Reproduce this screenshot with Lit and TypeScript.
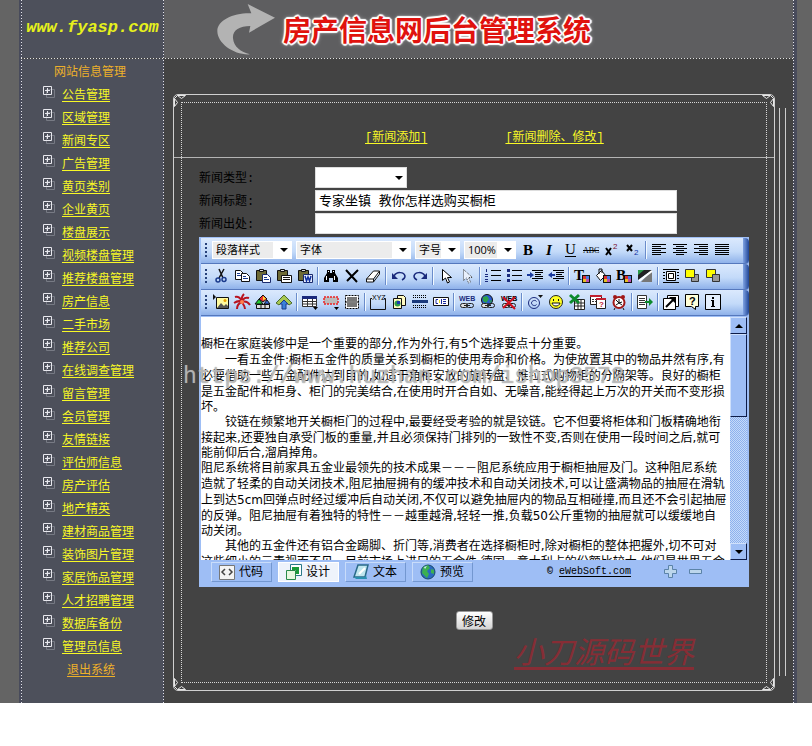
import { LitElement, html, css, svg } from "lit";
import { customElement, property } from "lit/decorators.js";

const swatches = (x: number, y: number) => svg`
  <path fill="#111" d="M${x} ${y}h8v8h-8z"/>
  <path fill="#d33" d="M${x + 1} ${y + 1}h3v3h-3z"/>
  <path fill="#4a7be0" d="M${x + 4} ${y + 1}h3v3h-3z"/>
  <path fill="#e8c020" d="M${x + 1} ${y + 4}h3v3h-3z"/>
  <path fill="#c04fb0" d="M${x + 4} ${y + 4}h3v3h-3z"/>`;

const board = svg`
  <path fill="#6d6a35" stroke="#111" d="M1.5 2.5h10v10h-10z"/>
  <path fill="#ddd" stroke="#111" d="M4.500 1.500h4v2h-4z"/>`;

const chain = svg`
  <rect x="1.500" y="9.500" width="7" height="4" rx="2" fill="#ddd" stroke="#222"/>
  <rect x="7.500" y="9.500" width="7" height="4" rx="2" fill="none" stroke="#222"/>
  <path stroke="#222" d="M5 11.500h6"/>`;

const icons: Record<string, unknown> = {
  bold: svg`<text x="3" y="13" class="serif b">B</text>`,
  italic: svg`<text x="5" y="13" class="serif b i">I</text>`,
  underline: svg`<text x="3" y="12" class="serif">U</text><path stroke="#000" d="M3 14.500h11"/>`,
  strike: svg`<text x="0" y="11" class="serif small">ABC</text><path stroke="#000" d="M0 8.500h16"/>`,
  sup: svg`<path stroke="#000" stroke-width="2" d="M2 6l5 7M7 6l-5 7"/><text x="9" y="7" class="sans tiny" fill="#7a1030">2</text>`,
  sub: svg`<path stroke="#000" stroke-width="2" d="M2 3l5 6M7 3l-5 6"/><text x="9" y="13" class="sans tiny" fill="#1030a0">2</text>`,
  alignLeft: svg`<path stroke="#000" d="M1 2.500h14M1 4.500h9M1 6.500h14M1 8.500h9M1 10.500h14M1 12.500h9"/>`,
  alignCenter: svg`<path stroke="#000" d="M1 2.500h14M4 4.500h8M1 6.500h14M4 8.500h8M1 10.500h14M4 12.500h8"/>`,
  alignRight: svg`<path stroke="#000" d="M1 2.500h14M6 4.500h9M1 6.500h14M6 8.500h9M1 10.500h14M6 12.500h9"/>`,
  justify: svg`<path stroke="#000" d="M1 2.500h14M1 4.500h14M1 6.500h14M1 8.500h14M1 10.500h14M1 12.500h14"/>`,
  cut: svg`<path stroke="#111" stroke-width="1.500" fill="none" d="M6 1l4 9M11 1L6 10"/><circle cx="5" cy="12" r="2" fill="none" stroke="#1a3a8c" stroke-width="1.500"/><circle cx="11" cy="11.500" r="2" fill="none" stroke="#1a3a8c" stroke-width="1.500"/>`,
  copy: svg`<path fill="#fff" stroke="#111" d="M1.500 2.500h5l3 3v6h-8z"/><path fill="#fff" stroke="#111" d="M7.500 5.500h5l3 3v5h-8z"/><path stroke="#1a3a8c" d="M3 5.500h3M3 7.500h4M9 8.500h3M9 10.500h5"/>`,
  paste: svg`${board}<path fill="#fff" stroke="#1a2a6c" d="M7.500 6.500h5l3 3v5h-8z"/><path stroke="#1a3a8c" d="M9 9.500h3M9 11.500h5"/>`,
  pasteText: svg`${board}<path fill="#fff" stroke="#111" d="M5.500 7.500h10v7h-10z"/><path stroke="#111" d="M7 9.500h7M7 11.500h7"/>`,
  pasteWord: svg`${board}<path fill="#e8eefc" stroke="#1a2a6c" d="M6.500 6.500h9v8h-9z"/><path stroke="#1030a0" stroke-width="1.500" fill="none" d="M8 8l1.500 5L11 9l1.500 4L14 8"/>`,
  find: svg`<path d="M4 2h3v3h2V2h3v3l3 5v4h-5v-4H6v4H1v-4l3-5z"/><path fill="#fff" d="M3 8h1v4H3zM11 8h1v4h-1zM5 3h1v1H5zM10 3h1v1h-1z"/>`,
  remove: svg`<path stroke="#000" stroke-width="2" d="M2 2l11 12M14 2L3 13"/>`,
  eraser: svg`<path fill="#fff" stroke="#111" d="M1.500 11l7-8h6l-6 8zM1.500 11v3h7v-3M8.500 14l6-8V3"/>`,
  undo: svg`<path fill="none" stroke="#1a2a7c" stroke-width="1.500" d="M3 8c3-5 10-4 11 0 0 2-1 3-3 4"/><path fill="#1a2a7c" d="M1 5v6h6z"/>`,
  redo: svg`<path fill="none" stroke="#1a2a7c" stroke-width="1.500" d="M13 8C10 3 3 4 2 8c0 2 1 3 3 4"/><path fill="#1a2a7c" d="M15 5v6H9z"/>`,
  pointer: svg`<path fill="#fff" stroke="#000" d="M4.500 1.500v11l3-2.500 2 5 2-1-2-4.500h4z"/>`,
  pointerOff: svg`<path fill="#e8f0fc" stroke="#444" stroke-dasharray="1 1" d="M4.500 1.500v11l3-2.500 2 5 2-1-2-4.500h4z"/>`,
  ol: svg`<path stroke="#1a2a7c" d="M1.500 1v3M0 6.500h3M0 8.500h3M0 11.500h3M0 13.500h3"/><path stroke="#000" d="M6 2.500h10M6 7.500h10M6 12.500h10"/>`,
  ul: svg`<path fill="#1a2a7c" d="M1 1h3v3H1zM1 6h3v3H1zM1 11h3v3H1z"/><path stroke="#000" d="M6 2.500h10M6 7.500h10M6 12.500h10"/>`,
  indent: svg`<path stroke="#000" d="M5 2.500h11M8 4.500h8M8 6.500h6M8 8.500h8M5 10.500h11M8 12.500h3"/><path fill="#1a3a9c" d="M3 4l4 3-4 3zM0 6h3v2H0z"/>`,
  outdent: svg`<path stroke="#000" d="M5 2.500h11M8 4.500h8M8 6.500h6M8 8.500h8M5 10.500h11M8 12.500h3"/><path fill="#1a3a9c" d="M4 4L0 7l4 3zM4 6h3v2H4z"/>`,
  textColor: svg`<text x="0" y="12" class="serif b">T</text>${swatches(8, 7)}`,
  fillColor: svg`<path fill="#fff" stroke="#111" d="M1.500 7.500l5-5 4 5-5 5z"/><path stroke="#111" fill="none" d="M4 6V1h3v4"/>${swatches(8, 7)}`,
  backColor: svg`<text x="0" y="12" class="serif b">B</text>${swatches(8, 7)}`,
  gradient: svg`<path fill="#222" d="M1 2h14L1 12z"/><path fill="#2a9a4a" d="M1 2h6L1 7z"/><path fill="#777" d="M15 2v12H4z"/><path stroke="#fff" stroke-width="2" d="M2 13L15 3"/>`,
  frame: svg`<path stroke="#000" d="M0 1.500h16M0 14.500h16M0 4.500h2M0 7.500h2M0 10.500h2M14 4.500h2M14 7.500h2M14 10.500h2"/><path fill="#fff" stroke="#000" d="M3.500 3.500h9v9h-9zM5.500 5.500h5v5h-5z"/>`,
  front: svg`<path fill="#999" stroke="#333" d="M7.500 6.500h7v7h-7z"/><path fill="#ff0" stroke="#333" d="M1.500 1.500h9v8h-9z"/>`,
  back: svg`<path fill="#ff0" stroke="#333" d="M1.500 1.500h9v8h-9z"/><path fill="#999" stroke="#333" d="M7.500 6.500h7v7h-7z"/>`,
  image: svg`<path fill="#111" d="M0 0l3 3-3 3z"/><path fill="#fffba0" stroke="#111" d="M3.500 3.500h12v11h-12z"/><path fill="#555" d="M4 14l4-5 3 3 2-2 2 2v2z"/><circle cx="12" cy="6.500" r="1.500" fill="#e8a000"/>`,
  flash: svg`<path stroke="#b81420" stroke-width="2" fill="none" d="M8 8C7 4 4 2 1 3M8 8C7 4 8 2 10 0M8 8c1-4 4-5 7-4M8 8C5 6 3 7 0 9M8 8c3-1 6 0 8 3M8 8c-3 1-5 3-5 7M8 8c1 2 3 4 3 7"/><circle cx="8" cy="8" r="2" fill="#ff8050"/>`,
  media: svg`<path fill="#e33" stroke="#111" d="M8 1l4 4-4 3-4-3z"/><path fill="#fd3" d="M8 2l3 3-3 1z"/><path fill="#2c3" stroke="#111" d="M4 5l4 5H0z"/><path fill="#36d" stroke="#111" d="M12 6l3 4H9z"/><path fill="#ddd" stroke="#111" d="M1.500 10.500h13v4h-13zM6 10.500v4M10 10.500v4"/>`,
  file: svg`<path fill="#a8c850" stroke="#4a6a30" d="M8 1l8 8-3 2-5-5-5 5-3-2z"/><path fill="#3a80d8" stroke="#1a3a8c" d="M8 6l4 4h-2v5H6v-5H4z"/>`,
  table: svg`<path fill="#fff" stroke="#333" d="M.5 2.500h14v10H.5zM.5 7.500h14M.5 10h14M5.500 4v8M10.500 4v8"/><path fill="#1a2a7c" d="M0 2h15v3H0z"/><path fill="#000" d="M11 13h5l-2.500 3z"/>`,
  row: svg`<path fill="#bbb" stroke="#e22" stroke-dasharray="2 1" stroke-width="1.500" d="M1 3h14v7H1z"/><path fill="#000" d="M11 13h5l-2.500 3z"/>`,
  cell: svg`<path fill="#fff" stroke="#000" stroke-dasharray="2 1" d="M1.500 1.500h13v13h-13z"/><path fill="#777" d="M3 3h10v4H3zM3 9h10v4H3z"/><path stroke="#000" d="M1 8h14"/>`,
  xyz: svg`<path fill="none" stroke="#111" d="M2 4.500H.5v11h15v-11H14"/><text x="2" y="6" class="sans micro thin">XYZ</text>`,
  pages: svg`<path fill="#fffbc0" stroke="#111" d="M6.500 1.500h6l2 2v8h-8z"/><path fill="#fffbc0" stroke="#111" d="M2.500 4.500h8v10h-8z"/><circle cx="6.500" cy="9.500" r="3" fill="#2a9a4a"/><path fill="#1a3aac" d="M6 7h3v3H6z"/>`,
  rule: svg`<path stroke="#000" stroke-dasharray="1 1" d="M1 1.500h14M1 3.500h14M1 11.500h14M1 13.500h14"/><path stroke="#1a3a7c" stroke-width="3" d="M0 7.500h16"/>`,
  marquee: svg`<path fill="#fff" stroke="#111" d="M.5 3.500h15v8H.5z"/><path fill="none" stroke="#1a2a9c" d="M5 5.500H3v4h2M8.500 5v5M10 5.500h3M10 7.500h3M10 9.500h3"/><path fill="#e8d820" d="M6 6h1v3H6z"/>`,
  link: svg`<text x="0" y="7" class="sans micro blue">WEB</text>${chain}`,
  globe: svg`<circle cx="7" cy="6" r="5.500" fill="#2a5ad0" stroke="#111"/><path fill="#2ca04a" d="M3 3l4-1 2 3-3 4-3-2zM9 7l3-1-1 3z"/>${chain}`,
  unlink: svg`<text x="0" y="7" class="sans micro">WEB</text>${chain}<path stroke="#d01020" stroke-width="2" d="M2 3l12 12M14 3L2 14"/>`,
  copyright: svg`<circle cx="7" cy="9" r="5.500" fill="none" stroke="#1a2a7c"/><path fill="none" stroke="#1a2a7c" d="M9.500 7.500c-1-2-5-1-5 1.500s4 3.500 5 1.500"/><path fill="#111" d="M11 1h5l-2.500 3z"/>`,
  smile: svg`<circle cx="8" cy="8" r="6.500" fill="#ff2" stroke="#222"/><path stroke="#111" fill="#fff" d="M4 9c1 4 7 4 8 0zM5.500 5v2M10.500 5v2"/>`,
  excel: svg`<path fill="#fff" stroke="#222" d="M5.500 5.500h10v10h-10zM5.500 9h10M5.500 12h10M9 6v9M12 6v9"/><path stroke="#0c8a2c" stroke-width="3" d="M1 1l9 8M10 1L1 9"/>`,
  calendar: svg`<path fill="#fff" stroke="#222" d="M.5 1.500h11v9H.5z"/><path fill="#c02030" d="M0 1h12v2H0z"/><path stroke="#333" stroke-dasharray="2 1" d="M2 5.500h4M2 7.500h4"/><path fill="#fff" stroke="#222" d="M6.500 4.500h9v10h-9z"/><path fill="#c02030" d="M6 4h10v2H6z"/><text x="9" y="13" class="sans tiny b" fill="#c02030">?</text>`,
  clock: svg`<circle cx="4" cy="3" r="2" fill="#a01818"/><circle cx="12" cy="3" r="2" fill="#a01818"/><circle cx="8" cy="8.500" r="5.500" fill="#fff" stroke="#a01818" stroke-width="2"/><path stroke="#111" fill="none" d="M8 5v4l3-1M4 14l-1 2M12 14l1 2M5 6l3 3M5 11l3-2M8 9l3 2"/>`,
  doc: svg`<path fill="#fff" stroke="#333" d="M.5 1.500h9v13h-9z"/><path stroke="#333" d="M2 4.500h6M2 6.500h6M2 8.500h6M2 10.500h6"/><path fill="#0c8a2c" d="M8 7h4V4l4 4-4 4V9H8z"/>`,
  expand: svg`<path fill="#fff" stroke="#000" d="M4.500 1.500h11v11h-3M4.500 1.500v3M.5 4.500h12v11H.5z"/><path stroke="#000" stroke-width="2" d="M3 13l8-8"/><path d="M6 3h7v7z"/>`,
  help: svg`<path fill="#ffffd8" stroke="#000" d="M1.500.5h13v12h-3v3l-4-3h-6z"/><text x="5" y="11" class="sans mid b">?</text>`,
  info: svg`<path fill="#e4effd" stroke="#000" d="M.5.500h15v15H.5z"/><path fill="#000" d="M7 3h2v2H7zM6 6h3v6h1v1H6v-1h1V7H6z"/>`,
  code: svg`<path fill="#f4f4f4" stroke="#777" d="M.5 1.500h15v14H.5z"/><path fill="none" stroke="#444" stroke-width="1.500" d="M6 5L3 8l3 3M10 5l3 3-3 3"/>`,
  design: svg`<path fill="#fff" stroke="#2a7a8a" d="M4.500.500h11v11h-11z"/><path fill="#e8f8e0" stroke="#2a8a4a" d="M.5 6.500h9v9h-9z"/><path fill="#1a9a3a" d="M6 3h7v7h-3V6H6z"/>`,
  text: svg`<path fill="#bfe6ee" stroke="#2a6a8a" stroke-width="1.500" d="M5 1h10l-3 12H1z"/><path fill="#2a90b0" d="M1 13l11 0 1-2 1 4H3z"/><path stroke="#fff" stroke-width="2" d="M6 10l6-6"/>`,
  preview: svg`<circle cx="8" cy="8" r="7" fill="#2a6ac0" stroke="#1a4a6a"/><path fill="#3cb050" d="M3 3l5-2 2 3-3 3 2 3-2 4-5-5zM11 5l3 1v4l-3-1z"/><path fill="#cfe8f8" d="M4 3l3-1-2 3z"/>`,
};

@customElement("tool-icon")
class ToolIcon extends LitElement {
  @property() name = "";
  static styles = css`
    :host { display: block; width: 16px; height: 16px; }
    svg { display: block; overflow: visible; }
    .serif { font: 15px "Liberation Serif", serif; }
    .sans { font: 12px "Liberation Sans", sans-serif; }
    .b { font-weight: 700; }
    .i { font-style: italic; }
    .small { font-size: 8px; }
    .tiny { font-size: 8px; }
    .mid { font-size: 11px; }
    .micro { font-size: 7px; font-weight: 700; }
    .thin { font-weight: 400; }
    .blue { fill: #1a2a7c; }
  `;
  render() {
    return html`<svg width="16" height="16" viewBox="0 0 16 16" fill="#000" aria-hidden="true">${icons[this.name]}</svg>`;
  }
}

const menu = ["公告管理", "区域管理", "新闻专区", "广告管理", "黄页类别", "企业黄页", "楼盘展示", "视频楼盘管理", "推荐楼盘管理", "房产信息", "二手市场", "推荐公司", "在线调查管理", "留言管理", "会员管理", "友情链接", "评估师信息", "房产评估", "地产精英", "建材商品管理", "装饰图片管理", "家居饰品管理", "人才招聘管理", "数据库备份", "管理员信息"];

const row1 = "bold italic underline strike sup sub | alignLeft alignCenter alignRight justify";
const row2 = "cut copy paste pasteText pasteWord | find remove eraser | undo redo | pointer pointerOff | ol ul indent outdent | textColor fillColor backColor gradient | frame front back";
const row3 = "image flash media file | table row cell | xyz pages rule marquee | link globe unlink | copyright smile excel calendar clock | doc | expand help info";

const article = [
  ["橱柜在家庭装修中是一个重要的部分,作为外行,有5个选择要点十分重要。",
    "　　一看五金件:橱柜五金件的质量关系到橱柜的使用寿命和价格。为使放置其中的物品井然有序,有",
    "必要借助一些五金配件达到目的,如适于角柜安放的旋转盘、推拉式购物柜的分隔架等。良好的橱柜",
    "是五金配件和柜身、柜门的完美结合,在使用时开合自如、无噪音,能经得起上万次的开关而不变形损",
    "坏。"],
  ["　　铰链在频繁地开关橱柜门的过程中,最要经受考验的就是铰链。它不但要将柜体和门板精确地衔",
    "接起来,还要独自承受门板的重量,并且必须保持门排列的一致性不变,否则在使用一段时间之后,就可",
    "能前仰后合,溜肩掉角。"],
  ["阻尼系统将目前家具五金业最领先的技术成果－－－阻尼系统应用于橱柜抽屉及门。这种阻尼系统",
    "造就了轻柔的自动关闭技术,阻尼抽屉拥有的缓冲技术和自动关闭技术,可以让盛满物品的抽屉在滑轨",
    "上到达5cm回弹点时经过缓冲后自动关闭,不仅可以避免抽屉内的物品互相碰撞,而且还不会引起抽屉",
    "的反弹。阻尼抽屉有着独特的特性－－越重越滑,轻轻一推,负载50公斤重物的抽屉就可以缓缓地自",
    "动关闭。"],
  ["　　其他的五金件还有铝合金踢脚、折门等,消费者在选择橱柜时,除对橱柜的整体把握外,切不可对",
    "这些细小的元素视而不见。目前市场上进口的五金件,德国、意大利占的份额比较大,他们是世界五金"],
];

@customElement("news-editor")
class NewsEditor extends LitElement {
  static styles = css`
    :host { display: block; background: #9ebef5; padding: 1px 0 0 2px; font: 12px "DejaVu Sans", "Noto Sans CJK SC", sans-serif; color: #000; }
    button { font: inherit; color: inherit; border: 0; padding: 0; background: none; }
    .bar { display: flex; align-items: center; height: 26px; box-sizing: border-box; padding: 0 0 1px 4px; border-bottom: 1px solid #5578bd; border-radius: 0 4px 4px 0;
      background: linear-gradient(to right, #7fa3e4, #1f4595) right / 6px 100% no-repeat, linear-gradient(#dbe9fd, #c3daf9 55%, #8fb2ea); overflow: hidden; }
    .grip { flex: none; width: 2px; height: 14px; margin-right: 3px; background: repeating-linear-gradient(#27417a 0 2px, transparent 2px 4px); }
    .tool { flex: none; width: 21px; height: 22px; display: grid; place-items: center; }
    .sep { flex: none; width: 1px; height: 18px; margin: 0 2px; background: #6a8ccb; box-shadow: 1px 0 #f1f9ff; }
    .picks { display: flex; gap: 4px; margin: 0 1px 0 2px; }
    .pick { position: relative; display: block; height: 18px; background: #fff; padding: 1px; box-sizing: border-box; }
    .pick::after { content: ""; position: absolute; right: 4px; top: 7px; border: 4px solid transparent; border-top-color: #000; border-bottom: 0; }
    .pick select { display: block; appearance: none; border: 0; border-radius: 0; width: 100%; height: 16px; padding: 0 0 0 3px; font: 11px/16px "Open Sans", "Noto Sans CJK SC", sans-serif; color: #000;
      background: linear-gradient(to left, #fff 18px, #ececec 18px); }
    .w-style { width: 80px; } .w-font { width: 115px; } .w-size { width: 45px; } .w-zoom { width: 52px; }
    .edit { display: flex; height: 243px; margin: 1px 2px 0 0; background: #fff; }
    .page { flex: 1; min-width: 0; overflow: hidden; padding-top: 19px; white-space: nowrap; }
    p { margin: 0; }
    .line { display: block; height: 16px; line-height: 16px; }
    .line:last-child { height: 14px; line-height: 14px; }
    p:last-child .line { height: 16px; line-height: 16px; }
    .scroll { width: 17px; display: flex; flex-direction: column; background: repeating-conic-gradient(#8db1ee 0 25%, #c6daf8 0 50%) 0 0 / 2px 2px; }
    .scroll button { height: 17px; display: grid; place-items: center; }
    .scroll button, .thumb { background: #9ebef5; box-sizing: border-box; border: 1px solid #cfe0fb; border-right-color: #0d1c48; border-bottom-color: #0d1c48; }
    .thumb { height: 83px; }
    .rest { flex: 1; }
    .foot { display: flex; align-items: flex-start; height: 27px; box-sizing: border-box; padding: 2px 46px 0 10px; }
    .tabs { display: flex; gap: 6px; flex: 1; }
    .tab { display: flex; align-items: center; gap: 4px; width: 61px; height: 20px; padding-left: 7px; box-sizing: border-box; border: 1px solid; border-color: #c9dcfa #7397d0 #7397d0 #c9dcfa; white-space: nowrap; line-height: 16px; }
    .tab.on { background: #eef3fb; border-color: #fff; }
    .brand { font: 10px/20px "Liberation Mono", monospace; display: flex; gap: 6px; margin-right: 33px; }
    .brand a { color: #000; text-underline-offset: 2px; }
    .grow { display: flex; gap: 11px; padding-top: 3px; }
  `;

  tools(list: string) {
    return list.split(" ").map((n) => n === "|"
      ? html`<span class="sep"></span>`
      : html`<button class="tool" type="button" aria-label=${n}><tool-icon name=${n}></tool-icon></button>`);
  }

  pick(cls: string, label: string) {
    return html`<label class="pick ${cls}"><select aria-label=${label}><option>${label}</option></select></label>`;
  }

  render() {
    return html`
      <div class="bar"><span class="grip"></span>
        <div class="picks">
          ${this.pick("w-style", "段落样式")}${this.pick("w-font", "字体")}${this.pick("w-size", "字号")}${this.pick("w-zoom", "100%")}
        </div>${this.tools(row1)}</div>
      <div class="bar"><span class="grip"></span>${this.tools(row2)}</div>
      <div class="bar"><span class="grip"></span>${this.tools(row3)}</div>
      <div class="edit">
        <div class="page">${article.map((p) => html`<p>${p.map((l) => html`<span class="line">${l}</span>`)}</p>`)}</div>
        <div class="scroll">
          <button type="button" aria-label="up"><svg width="8" height="4"><path d="M0 4h8L4 0z"/></svg></button>
          <div class="thumb"></div><div class="rest"></div>
          <button type="button" aria-label="down"><svg width="8" height="4"><path d="M0 0h8L4 4z"/></svg></button>
        </div>
      </div>
      <div class="foot">
        <div class="tabs">
          <button class="tab" type="button"><tool-icon name="code"></tool-icon>代码</button>
          <button class="tab on" type="button"><tool-icon name="design"></tool-icon>设计</button>
          <button class="tab" type="button"><tool-icon name="text"></tool-icon>文本</button>
          <button class="tab" type="button"><tool-icon name="preview"></tool-icon>预览</button>
        </div>
        <div class="brand"><b>©</b><a href="#">eWebSoft.com</a></div>
        <div class="grow">
          <button type="button" aria-label="larger"><svg width="14" height="14"><path fill="#bcd6ec" stroke="#5b83a8" d="M4.500 .500h4v4h4v4h-4v4h-4v-4h-4v-4h4z"/></svg></button>
          <button type="button" aria-label="smaller"><svg width="14" height="14"><path fill="#bcd6ec" stroke="#5b83a8" d="M.5 4.500h12v4H.5z"/></svg></button>
        </div>
      </div>`;
  }
}

@customElement("app-root")
class AppRoot extends LitElement {
  static styles = css`
    :host { display: block; background: #646464; font: 12px/16px "Liberation Mono", "Noto Sans CJK SC", monospace; color: #000; overflow: hidden; }
    .shell { margin: 0 15px 0 19px; padding: 0 3px 0 2px; background: #484b5b; }
    .grid { display: grid; grid-template-columns: 1px 141px 1px minmax(0, 1fr) 1px; grid-template-rows: 58px 1px auto; }
    .v { grid-row: 1 / 4; background: repeating-linear-gradient(#e4e4ea 0 1px, #484b5b 1px 3px); }
    .v1 { grid-column: 1; } .v2 { grid-column: 3; } .v3 { grid-column: 5; }
    .h { grid-area: 2 / 1 / 3 / 6; background: repeating-linear-gradient(to right, #e4e4e4 0 1px, #484848 1px 3px); }
    .logo { grid-area: 1 / 2; background: #4d505b; display: grid; place-items: center; color: #e6f01c; font: italic 700 17px "Liberation Mono", monospace; padding-bottom: 4px; }
    .head { grid-area: 1 / 4; background: #5e5e60; display: flex; align-items: center; gap: 7px; padding-left: 52px; }
    h1 { margin: 0; font: 700 28px/40px "Noto Sans CJK SC", sans-serif; color: #e0120e; white-space: nowrap;
      text-shadow: 2px 0 1px #fff, -2px 0 1px #fff, 0 2px 1px #fff, 0 -2px 1px #fff, 1px 1px 1px #fff, -1px -1px 1px #fff, 1px -1px 1px #fff, -1px 1px 1px #fff, 0 0 5px #ddd; }
    .side { grid-area: 3 / 2; background: #4d505b; font: 12px/23px "Noto Sans CJK SC", sans-serif; }
    .side ul { margin: 0; padding: 0 0 0 21px; list-style: none; }
    .side li { display: flex; gap: 7px; height: 23px; }
    .side svg { flex: none; margin-top: 4px; }
    .side h2 { margin: 0; padding-left: 32px; font: inherit; color: #eeb02a; }
    a { color: #f8f826; text-underline-offset: 2px; }
    .out { display: block; margin-left: 45px; color: #eeb02a; }
    .main { grid-area: 3 / 4; background: #434343; display: flex; padding: 35px 7px 12px 9px; }
    .rails { flex: none; width: 5px; margin: 14px 0 15px 4px; border: 1px solid #ccc; border-width: 0 1px; }
    .panel { position: relative; flex: 1; min-width: 0; border: 1px solid #d0d0d0; border-radius: 5px; box-sizing: border-box; }
    .panel::before { content: ""; position: absolute; inset: 7px; border: 1px dotted #d8d8d8; pointer-events: none; }
    .c { position: absolute; width: 13px; height: 13px; }
    .tl { top: -1px; left: -1px; } .tr { top: -1px; right: -1px; transform: rotate(90deg); }
    .br { bottom: -1px; right: -1px; transform: rotate(180deg); } .bl { bottom: -1px; left: -1px; transform: rotate(270deg); }
    .acts { display: flex; gap: 78px; padding: 35px 0 11px 191px; border-bottom: 1px solid #b4b4b4; white-space: nowrap; }
    form { padding: 9px 25px 60px; }
    .fields { display: grid; grid-template-columns: 116px minmax(0, 1fr); grid-auto-rows: 22px; row-gap: 1px; }
    .fields label { line-height: 24px; }
    .fields input { width: 362px; max-width: 100%; height: 21px; box-sizing: border-box; border: 1px solid #ddd; padding: 0 3px 2px; background: #fff; font: 13px "Liberation Mono", "Noto Sans CJK SC", monospace; }
    .kind { position: relative; width: 92px; height: 21px; }
    .kind::after { content: ""; position: absolute; right: 4px; top: 9px; border: 4px solid transparent; border-top-color: #000; border-bottom: 0; }
    .kind select { display: block; appearance: none; width: 100%; height: 21px; border: 1px solid #ddd; border-radius: 0; background: #fff; }
    news-editor { margin: 2px 0 24px; }
    .send { display: block; margin: 0 auto; width: 37px; height: 19px; padding: 0; border: 1px solid #999; border-radius: 3px; background: linear-gradient(#fff, #d4d4d4); font: 12px/16px "Noto Sans CJK SC", sans-serif; color: #000; }
    .sign { position: absolute; right: 80px; bottom: 20px; font: italic 30px/40px "Noto Sans CJK SC", sans-serif; color: #b4202c; opacity: .6; text-decoration: underline; text-underline-offset: 4px; }
    .mark { position: absolute; left: 9px; top: 269px; font: 23px/26px "Liberation Mono", monospace; color: rgba(225, 225, 225, .6); text-shadow: 0 0 1px #777; pointer-events: none; white-space: nowrap; }
  `;

  corner(cls: string) {
    return html`<svg class="c ${cls}" viewBox="0 0 13 13"><path fill="#434343" stroke="#e8e8e8" d="M4.500 1.500h8l-4 3zM1.500 4.500v8l3-4zM1.500 4.500l3-3"/></svg>`;
  }

  render() {
    return html`<div class="shell"><div class="grid">
      <div class="logo">www.fyasp.com</div>
      <header class="head">
        <svg width="60" height="54" viewBox="646 6 180 162"><path fill="#b3b3b3" d="M741 12L823 53 745 98 749 78C715 78 695 92 697 115 699 140 720 157 748 163 700 166 650 130 650 93 650 60 700 38 752 40z"/></svg>
        <h1>房产信息网后台管理系统</h1>
      </header>
      <nav class="side">
        <h2>网站信息管理</h2>
        <ul>${menu.map((m) => html`<li>
          <svg width="12" height="12" fill="none"><path stroke="#777a84" d="M3.500 3.500h8v8h-8z"/><path stroke="#e8e8ee" d="M.5.500h8v8h-8zM4.500 2v5M2 4.500h5"/></svg>
          <a href="#">${m}</a></li>`)}</ul>
        <a class="out" href="#"><span>退出系统</span></a>
      </nav>
      <main class="main">
        <section class="panel">
          ${["tl", "tr", "br", "bl"].map((c) => this.corner(c))}
          <div class="acts"><a href="#">[新闻添加]</a><a href="#">[新闻删除、修改]</a></div>
          <form>
            <div class="fields">
              <label for="kind">新闻类型:</label><div class="kind"><select id="kind"><option></option></select></div>
              <label for="title">新闻标题:</label><input id="title" type="text" value="专家坐镇 教你怎样选购买橱柜">
              <label for="from">新闻出处:</label><input id="from" type="text">
            </div>
            <news-editor></news-editor>
            <button class="send" type="button">修改</button>
          </form>
          <div class="sign">小刀源码世界</div>
          <div class="mark">https://www.huzhan.com/ishop3572</div>
        </section>
        <div class="rails"></div>
      </main>
      <div class="v v1"></div><div class="v v2"></div><div class="v v3"></div><div class="h"></div>
    </div></div>`;
  }
}
